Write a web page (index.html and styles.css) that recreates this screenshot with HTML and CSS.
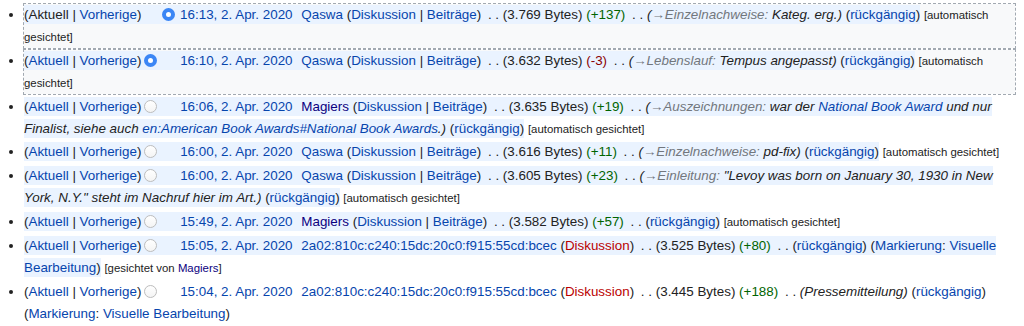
FILE: index.html
```html
<!DOCTYPE html>
<html>
<head>
  <meta charset="UTF-8">
  <title>Versionsgeschichte</title>
  <link rel="stylesheet" href="styles.css">
</head>
<body>
  <ul id="pagehistory">
    <li class="selected">
      <span class="hl"><span class="histlinks">(Aktuell<span class="bar"> | </span><a href="#">Vorherige</a>)</span><span class="radio first hidden"></span><span class="radio second checked"></span> <a class="date" href="#">16:13, 2. Apr. 2020</a> <span class="user"><a href="#">Qaswa</a> <span class="tools">(<a href="#">Diskussion</a><span class="bar"> | </span><a href="#">Beiträge</a>)</span></span> <span class="sep">. .</span> <span class="size">(3.769 Bytes)</span> <span class="pos">(+137)</span> <span class="sep">. .</span> <span class="comment">(<span class="auto"><a href="#">→</a>Einzelnachweise:</span> Kateg. erg.)</span> (<a href="#">rückgängig</a>)</span> <span class="flag">[automatisch gesichtet]</span>
    </li>
    <li class="selected">
      <span class="hl"><span class="histlinks">(<a href="#">Aktuell</a><span class="bar"> | </span><a href="#">Vorherige</a>)</span><span class="radio first checked"></span><span class="radio second hidden"></span> <a class="date" href="#">16:10, 2. Apr. 2020</a> <span class="user"><a href="#">Qaswa</a> <span class="tools">(<a href="#">Diskussion</a><span class="bar"> | </span><a href="#">Beiträge</a>)</span></span> <span class="sep">. .</span> <span class="size">(3.632 Bytes)</span> <span class="neg">(-3)</span> <span class="sep">. .</span> <span class="comment">(<span class="auto"><a href="#">→</a>Lebenslauf:</span> Tempus angepasst)</span> (<a href="#">rückgängig</a>)</span> <span class="flag">[automatisch gesichtet]</span>
    </li>
    <li>
      <span class="hl"><span class="histlinks">(<a href="#">Aktuell</a><span class="bar"> | </span><a href="#">Vorherige</a>)</span><span class="radio first"></span><span class="radio second hidden"></span> <a class="date" href="#">16:06, 2. Apr. 2020</a> <span class="user"><a class="visited" href="#">Magiers</a> <span class="tools">(<a href="#">Diskussion</a><span class="bar"> | </span><a href="#">Beiträge</a>)</span></span> <span class="sep">. .</span> <span class="size">(3.635 Bytes)</span> <span class="pos">(+19)</span> <span class="sep">. .</span> <span class="comment">(<span class="auto"><a href="#">→</a>Auszeichnungen:</span> war der <a href="#">National Book Award</a> und nur Finalist, siehe auch <a href="#">en:American Book Awards#National Book Awards</a>.)</span> (<a href="#">rückgängig</a>)</span> <span class="flag">[automatisch gesichtet]</span>
    </li>
    <li>
      <span class="hl"><span class="histlinks">(<a href="#">Aktuell</a><span class="bar"> | </span><a href="#">Vorherige</a>)</span><span class="radio first"></span><span class="radio second hidden"></span> <a class="date" href="#">16:00, 2. Apr. 2020</a> <span class="user"><a href="#">Qaswa</a> <span class="tools">(<a href="#">Diskussion</a><span class="bar"> | </span><a href="#">Beiträge</a>)</span></span> <span class="sep">. .</span> <span class="size">(3.616 Bytes)</span> <span class="pos">(+11)</span> <span class="sep">. .</span> <span class="comment">(<span class="auto"><a href="#">→</a>Einzelnachweise:</span> pd-fix)</span> (<a href="#">rückgängig</a>)</span> <span class="flag">[automatisch gesichtet]</span>
    </li>
    <li>
      <span class="hl"><span class="histlinks">(<a href="#">Aktuell</a><span class="bar"> | </span><a href="#">Vorherige</a>)</span><span class="radio first"></span><span class="radio second hidden"></span> <a class="date" href="#">16:00, 2. Apr. 2020</a> <span class="user"><a href="#">Qaswa</a> <span class="tools">(<a href="#">Diskussion</a><span class="bar"> | </span><a href="#">Beiträge</a>)</span></span> <span class="sep">. .</span> <span class="size">(3.605 Bytes)</span> <span class="pos">(+23)</span> <span class="sep">. .</span> <span class="comment">(<span class="auto"><a href="#">→</a>Einleitung:</span> "Levoy was born on January 30, 1930 in New York, N.Y." steht im Nachruf hier im Art.)</span> (<a href="#">rückgängig</a>)</span> <span class="flag">[automatisch gesichtet]</span>
    </li>
    <li>
      <span class="hl"><span class="histlinks">(<a href="#">Aktuell</a><span class="bar"> | </span><a href="#">Vorherige</a>)</span><span class="radio first"></span><span class="radio second hidden"></span> <a class="date" href="#">15:49, 2. Apr. 2020</a> <span class="user"><a class="visited" href="#">Magiers</a> <span class="tools">(<a href="#">Diskussion</a><span class="bar"> | </span><a href="#">Beiträge</a>)</span></span> <span class="sep">. .</span> <span class="size">(3.582 Bytes)</span> <span class="pos">(+57)</span> <span class="sep">. .</span> (<a href="#">rückgängig</a>)</span> <span class="flag">[automatisch gesichtet]</span>
    </li>
    <li>
      <span class="hl"><span class="histlinks">(<a href="#">Aktuell</a><span class="bar"> | </span><a href="#">Vorherige</a>)</span><span class="radio first"></span><span class="radio second hidden"></span> <a class="date" href="#">15:05, 2. Apr. 2020</a> <span class="user"><a href="#">2a02:810c:c240:15dc:20c0:f915:55cd:bcec</a> <span class="tools">(<a class="new" href="#">Diskussion</a>)</span></span> <span class="sep">. .</span> <span class="size">(3.525 Bytes)</span> <span class="pos">(+80)</span> <span class="sep">. .</span> (<a href="#">rückgängig</a>) <span class="tags">(<a href="#">Markierung</a>: <a href="#">Visuelle Bearbeitung</a>)</span></span> <span class="flag">[gesichtet von <a class="visited" href="#">Magiers</a>]</span>
    </li>
    <li>
      <span class="histlinks">(<a href="#">Aktuell</a><span class="bar"> | </span><a href="#">Vorherige</a>)</span><span class="radio first"></span><span class="radio second hidden"></span> <a class="date" href="#">15:04, 2. Apr. 2020</a> <span class="user"><a href="#">2a02:810c:c240:15dc:20c0:f915:55cd:bcec</a> <span class="tools">(<a class="new" href="#">Diskussion</a>)</span></span> <span class="sep">. .</span> <span class="size">(3.445 Bytes)</span> <span class="pos">(+188)</span> <span class="sep">. .</span> <span class="comment">(Pressemitteilung)</span> (<a href="#">rückgängig</a>) <span class="tags">(<a href="#">Markierung</a>: <a href="#">Visuelle Bearbeitung</a>)</span>
    </li>
  </ul>
</body>
</html>
```

FILE: styles.css
```css
body {
  margin: 0;
  background-color: #fff;
  color: #222;
  font-family: "Liberation Sans", Arial, sans-serif;
  font-size: 13.4px;
}
a {
  color: #0645ad;
  text-decoration: none;
}
a.visited {
  color: #0b0080;
}
a.new {
  color: #ba0000;
}
#pagehistory {
  margin: 4px 9px 0 24px;
  padding: 0;
  line-height: 22px;
  list-style: disc;
}
#pagehistory li {
  margin-bottom: 1.8px;
}
#pagehistory li.selected {
  background-color: #f8f9fa;
  outline: 1px dashed #a2a9b1;
}
.hl {
  background-color: #eaf3ff;
  padding: 2px 0;
}
.radio {
  display: inline-block;
  width: 13px;
  height: 13px;
  box-sizing: border-box;
  border: 1px solid #bdbdbd;
  border-radius: 50%;
  background: linear-gradient(#fff, #f4f4f4);
  vertical-align: -2px;
}
.radio.first {
  margin-left: 3px;
}
.radio.second {
  margin-left: 5px;
  margin-right: 1px;
}
.radio.hidden {
  visibility: hidden;
}
.radio.checked {
  border: 4px solid #3b86f5;
  background: #fff;
}
.date {
  margin-right: 5px;
}
.sep {
  margin-left: 3px;
}
.pos {
  color: #006400;
}
.neg {
  color: #8b0000;
}
.comment {
  font-style: italic;
}
.auto,
.auto a {
  color: #72777d;
}
.flag {
  font-size: 11.4px;
  color: #222;
}
```
